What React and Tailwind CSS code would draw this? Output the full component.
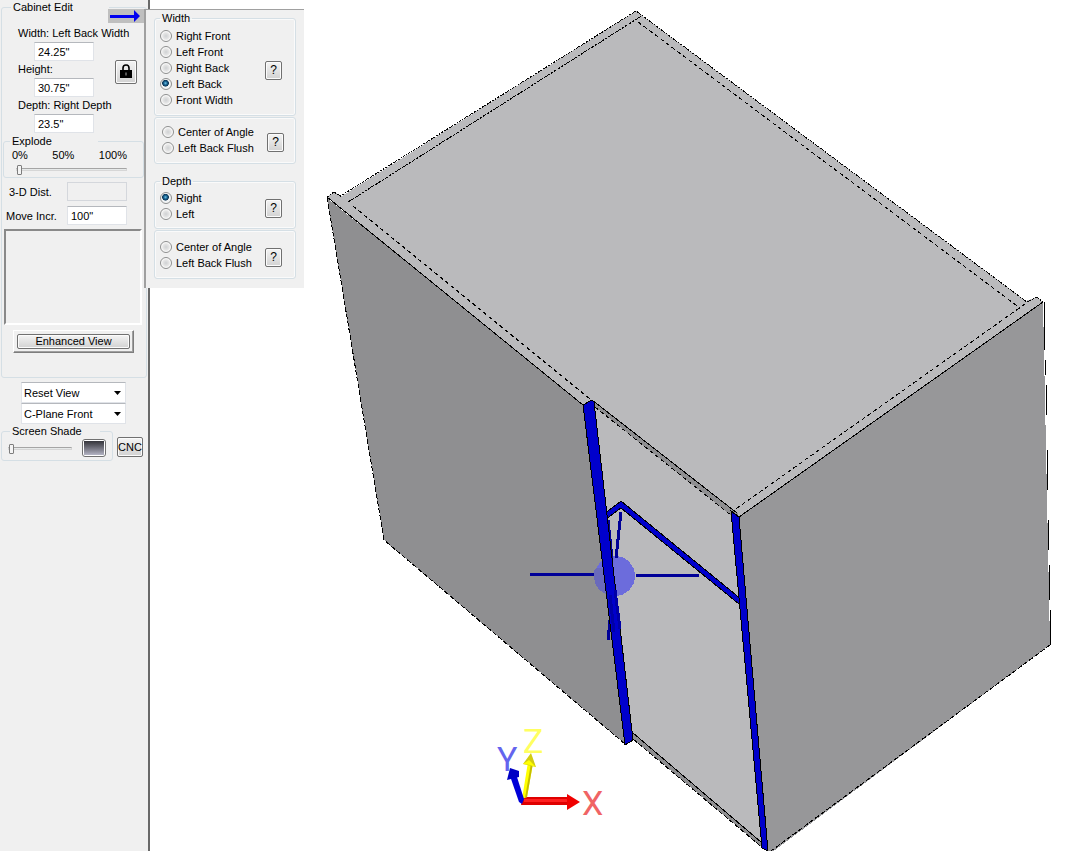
import React from 'react';

const field =
  "h-[19px] w-[60px] border border-[#e0e3e8] border-t-[#b5b8bd] bg-white px-[3px] text-[11px] leading-[16px] outline-none";

const slider =
  "h-[11px] appearance-none bg-transparent [&::-webkit-slider-runnable-track]:h-[3px] [&::-webkit-slider-runnable-track]:border [&::-webkit-slider-runnable-track]:border-[#d6d6d6] [&::-webkit-slider-runnable-track]:border-t-[#a5a5a5] [&::-webkit-slider-runnable-track]:bg-[#e7eaea] [&::-webkit-slider-thumb]:-mt-1 [&::-webkit-slider-thumb]:h-[10px] [&::-webkit-slider-thumb]:w-[5px] [&::-webkit-slider-thumb]:appearance-none [&::-webkit-slider-thumb]:rounded-[1px] [&::-webkit-slider-thumb]:border [&::-webkit-slider-thumb]:border-[#7d7d7d] [&::-webkit-slider-thumb]:bg-[#f4f4f4]";

const smallButton =
  "flex items-center justify-center rounded-[2px] border border-[#707070] bg-linear-to-b from-[#f4f4f4] to-[#d2d2d2] shadow-[inset_0_0_0_1px_#fbfbfb]";

function Dimension({ id, label, value, className = "" }) {
  return (
    <>
      <label htmlFor={id} className={`col-start-1 h-[17px] leading-[17px] whitespace-nowrap ${className}`}>{label}</label>
      <input id={id} defaultValue={value} className={`${field} col-start-1 ml-4`} />
    </>
  );
}

function DropDown({ label, options }) {
  return (
    <div className="relative">
      <select
        aria-label={label}
        className="block h-[21px] w-full appearance-none border border-[#e0e3e8] border-t-[#b5b8bd] bg-white pl-[2px] text-[11px] leading-[18px] outline-none"
      >
        {options.map((o) => <option key={o}>{o}</option>)}
      </select>
      <svg viewBox="0 0 7 4" className="pointer-events-none absolute top-[9px] right-[5px] h-1 w-[7px]">
        <path d="M0 0h7L3.5 4z" />
      </svg>
    </div>
  );
}

function RadioBox({ title, name, items, selected, className }) {
  return (
    <fieldset aria-label={name} className={`rounded-[3px] border border-[#d5dfe5] px-[5px] shadow-[inset_0_0_0_1px_#fafafa] ${className}`}>
      {title && <legend className="h-[14px] px-[2px] leading-[14px]">{title}</legend>}
      <div className="flex items-center justify-between pr-2">
        <div className="flex flex-col">
          {items.map((item) => (
            <label key={item} className="flex h-4 items-center gap-1 leading-4 whitespace-nowrap">
              <input
                type="radio"
                name={name}
                defaultChecked={item === selected}
                className="size-3 appearance-none rounded-full border border-[#8e8f8f] bg-[radial-gradient(circle,#cfd1d3_0,#e6e6e6_45%,#fafafa_65%)] checked:bg-[radial-gradient(circle_at_45%_42%,#6cc4e8_0,#17608f_22%,#0c3656_38%,#f2f4f5_46%)]"
              />
              {item}
            </label>
          ))}
        </div>
        <button aria-label={`${name} help`} className={`${smallButton} mt-1 h-[19px] w-[17px] text-[12px]`}>?</button>
      </div>
    </fieldset>
  );
}

function FlyOut() {
  return (
    <div className="absolute top-[9px] left-[144px] w-40 border-t border-l-2 border-[#a0a0a0] bg-[#f0f0f0] pt-px pr-2 pb-[9px] pl-2">
      <RadioBox
        title="Width"
        name="Width"
        items={["Right Front", "Left Front", "Right Back", "Left Back", "Front Width"]}
        selected="Left Back"
        className="pt-[3px] pb-[7px]"
      />
      <RadioBox name="Width alignment" items={["Center of Angle", "Left Back Flush"]} className="mt-px pt-[6px] pr-[3px] pb-[7px] pl-[7px]" />
      <RadioBox title="Depth" name="Depth" items={["Right", "Left"]} selected="Right" className="mt-[10px] pt-[2px] pb-[6px]" />
      <RadioBox name="Depth alignment" items={["Center of Angle", "Left Back Flush"]} className="mt-px pt-2 pb-[7px]" />
    </div>
  );
}

function Sidebar() {
  return (
    <aside className="w-[150px] shrink-0 border-r-2 border-[#696969] bg-[#f0f0f0] pr-px pl-px">
      <fieldset className="rounded-[3px] border border-[#d5dfe5] px-px pb-6">
        <legend className="ml-2 h-[14px] w-[98px] px-[2px] leading-[14px]">Cabinet Edit</legend>

        <div className="grid grid-cols-[1fr_auto] pt-[11px] pr-2 pl-[15px]">
          <Dimension id="width" label="Width: Left Back Width" value={'24.25"'} className="col-span-2" />
          <Dimension id="height" label="Height:" value={'30.75"'} />
          <Dimension id="depth" label="Depth: Right Depth" value={'23.5"'} />
          <button aria-label="Lock" className={`${smallButton} col-start-2 row-span-3 row-start-2 mt-1 h-6 w-[22px] self-center`}>
            <svg viewBox="0 0 12 15" className="h-[15px] w-3">
              <path d="M3 7V4a3 3 0 0 1 6 0v3" fill="none" stroke="#000" strokeWidth="1.6" />
              <path d="M0 6h12v8H0z" />
              <path d="M5 8.5h2v3H5z" fill="#555" />
            </svg>
          </button>
        </div>

        <fieldset className="mt-px mr-px rounded-[3px] border border-[#d5dfe5] pb-px">
          <legend className="ml-1.5 h-[14px] w-[88px] px-[2px] leading-[14px]">Explode</legend>
          <div className="flex justify-between pr-4 pl-2 leading-[14px]">
            <span>0%</span>
            <span>50%</span>
            <span>100%</span>
          </div>
          <div className="flex h-[14px] items-center pr-4 pl-3">
            <input type="range" aria-label="Explode" defaultValue="0" className={`${slider} w-full`} />
          </div>
        </fieldset>

        <div className="mt-1 flex flex-col gap-[5px] pr-[18px] pl-[3px]">
          <div className="flex items-center justify-between">
            <label htmlFor="dist" className="pl-[3px]">3-D Dist.</label>
            <input id="dist" disabled className="h-[19px] w-[60px] border border-[#d4d7dc] bg-[#f0f0f0]" />
          </div>
          <div className="flex items-center justify-between">
            <label htmlFor="incr">Move Incr.</label>
            <input id="incr" defaultValue={'100"'} className={field} />
          </div>
        </div>

        <div className="mt-1 mr-[3px] ml-px h-24 border-2 border-t-[#898989] border-r-white border-b-white border-l-[#898989]" />

        <div className="mt-[5px] mr-[11px] ml-[10px] border border-t-white border-r-[#7d7d7d] border-b-[#7d7d7d] border-l-white p-[3px] shadow-[inset_-1px_-1px_0_#a0a0a0]">
          <button className={`${smallButton} h-[15px] w-full leading-[13px]`}>Enhanced View</button>
        </div>
      </fieldset>

      <div className="mt-1 pr-[21px] pl-5">
        <DropDown label="View" options={["Reset View"]} />
        <DropDown label="C-Plane" options={["C-Plane Front"]} />
      </div>

      <div className="flex items-end">
        <fieldset className="w-[112px] rounded-[3px] border border-[#d5dfe5] pb-[3px]">
          <legend className="ml-2 h-[14px] w-[90px] px-[2px] leading-[14px]">Screen Shade</legend>
          <div className="flex items-center justify-between pt-px pr-1.5 pl-1.5">
            <input type="range" aria-label="Screen Shade" defaultValue="0" className={`${slider} w-16`} />
            <button aria-label="Shade color" className="h-[18px] w-6 rounded-[3px] border border-[#707070] bg-white p-px">
              <span className="block h-full bg-linear-to-b from-[#35353b] to-[#b4b4c4]" />
            </button>
          </div>
        </fieldset>
        <button className={`${smallButton} mb-1 ml-1 h-5 w-[26px]`}>CNC</button>
      </div>
    </aside>
  );
}

function Cabinet() {
  return (
    <g strokeWidth="1" shapeRendering="crispEdges">
      {/* top */}
      <path d="M327 197L334 192L342 196L636 11L1026 301L1037 297L1043 302L739 517L592 400L583 405Z" fill="#bababc" />
      {/* sides */}
      <path d="M327 198L585 406L625 744L384 540Z" fill="#8f8f91" />
      <path d="M739 517L1043 302L1050 645L771 853L766 851Z" fill="#979799" />
      {/* opening */}
      <path d="M592 400L735 513L764 848L633 736Z" fill="#bababc" />
      <path d="M592 400L739 514L733 517L594 406Z" fill="#8f8f91" />
      <path d="M633 733L762 842L764 849L633 739Z" fill="#8f8f91" />

      <g fill="none" stroke="#000">
        <path d="M327 197L583 405M739 517L1043 302M592 400L737 513M633 733L761 842" />
        <path d="M327 197L334 192L342 197M342 195L636 11L1027 302L1037 297L1043 302" strokeDasharray="2 1" />
        <path d="M348 202L643 15" strokeDasharray="3 1" />
        <path d="M638 22L1020 308M353 206L590 399M1025 304L733 511M595 407L732 516" strokeDasharray="4 3" />
        <path d="M327 197L384 540L625 744M1050 645L771 851M633 739L764 849" strokeDasharray="5 2" />
        <path d="M1044 302V350M1045 360V375M1046 385V415M1047 450V490M1048 520V550M1049 565V600M1050 610V645" />
      </g>

      {/* view center marker */}
      <circle cx="615" cy="576" r="20" fill="#6c6cdc" />
      <path d="M594 570Q598 566 605 570L609 595Q592 590 594 570" fill="#6a6abb" />
      <g fill="none" stroke="#000098" strokeWidth="3">
        <path d="M530 574H560L594 575M636 575H699M621 512L616 558M608 520L612 558M612 600L608 640M615 590L620 629" />
      </g>

      {/* frame */}
      <g fill="#0000cc" stroke="#000">
        <path d="M604 514L621 501L741 599L739 604L621 508L606 519Z" />
        <path d="M583 405L592 400L594 402L633 740L625 745Z" />
        <path d="M731 511L739 517L768 851L762 848Z" />
      </g>
      <path d="M615 590L620 629M610 595L614 632" stroke="#0000a8" strokeWidth="3" />
    </g>
  );
}

function Axes() {
  return (
    <g>
      <path d="M523 797H568V805H521Z" fill="#e00000" />
      <path d="M524 799H568V802H524Z" fill="#ff2020" />
      <path d="M567 794L580 802L567 810Z" fill="#f00000" />
      <path d="M522 799L528 762L533 763L527 797Z" fill="#ffff00" />
      <path d="M531 763L533 763L527 797L525 798Z" fill="#c4bd00" />
      <path d="M523 764L531 753L536 767Z" fill="#d2cc10" />
      <path d="M523 764L529 760L536 767L530 765Z" fill="#ffff00" />
      <path d="M519 802L510 776L516 774L524 799L522 804Z" fill="#0000d8" />
      <path d="M507 780L510 768L519 771V777Z" fill="#0000c4" />
      <g className="font-['Roboto',sans-serif] text-[34px]">
        <text x="582" y="815" fill="#f06464">X</text>
        <text x="497" y="771" fill="#6464ee">Y</text>
        <text x="523" y="753" fill="#ffff60">Z</text>
      </g>
    </g>
  );
}

export default function App() {
  return (
    <div className="relative flex min-h-screen bg-white font-['Liberation_Sans',Arial,sans-serif] text-[11px] leading-[14px] text-black">
      <Sidebar />

      <main className="min-w-0 flex-1">
        <svg viewBox="150 0 918 851" preserveAspectRatio="xMinYMin meet" className="block h-screen w-full" role="img" aria-label="Cabinet">
          <Cabinet />
          <Axes />
        </svg>
      </main>

      <FlyOut />

      <button aria-label="Options" className="absolute top-[9px] left-[108px] h-[14px] w-9 bg-[#bfbfbf]">
        <svg viewBox="0 0 36 14" className="block h-[14px] w-9">
          <path d="M2 6h24V1l6 6-6 6V9H2z" fill="#0000f0" />
        </svg>
      </button>
    </div>
  );
}
